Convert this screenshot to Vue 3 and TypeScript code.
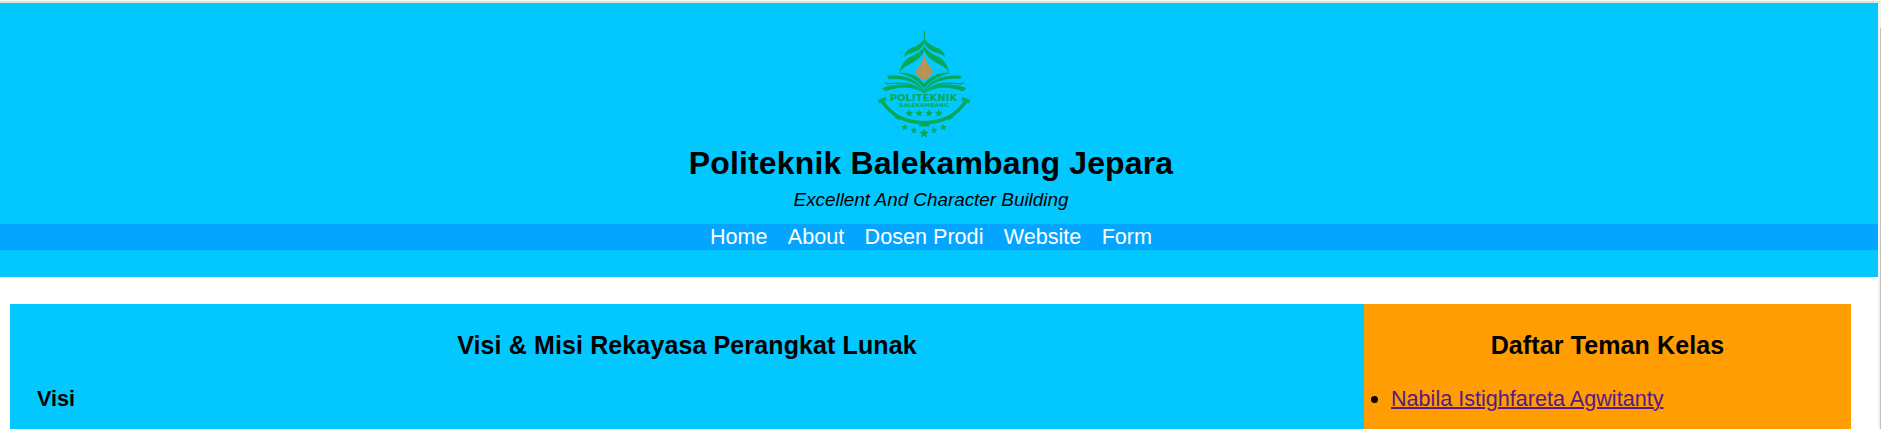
<script setup lang="ts">
const links: string[] = ['Home', 'About', 'Dosen Prodi', 'Website', 'Form']
const friends: string[] = ['Nabila Istighfareta Agwitanty']

interface Star { x: number; y: number; r: number }
const stars: Star[] = [
  { x: 148, y: 280, r: 12 },
  { x: 177, y: 280, r: 12 },
  { x: 207, y: 280, r: 12 },
  { x: 236, y: 280, r: 12 },
  { x: 134, y: 322, r: 11 },
  { x: 162, y: 331, r: 11 },
  { x: 192, y: 340, r: 16 },
  { x: 222, y: 331, r: 11 },
  { x: 250, y: 322, r: 11 },
]

function starPoints(s: Star): string {
  return Array.from({ length: 10 }, (_, i) => {
    const r = i % 2 ? s.r * 0.45 : s.r
    const a = (Math.PI * i) / 5 - Math.PI / 2
    return `${(s.x + r * Math.cos(a)).toFixed(1)},${(s.y + r * Math.sin(a)).toFixed(1)}`
  }).join(' ')
}
</script>

<template>
  <div class="window">
    <div class="edge"></div>
    <div class="body">
      <div class="page">
        <header class="header">
          <svg class="logo" viewBox="0 0 390 375" role="img" aria-label="Logo Politeknik Balekambang">
            <g fill="#04a857">
              <path d="M192 33h3l1 8-1 4 2 4-2 5v12h-3V54l-2-5 2-4-1-4z" />
              <path d="M193 56C184 70 171 77 156 83C141 89 134 97 132 111C141 103 151 101 162 97C178 91 190 80 193 69C197 80 209 91 225 97C236 101 246 103 255 111C253 97 246 89 231 83C216 77 203 70 193 56Z" />
              <path d="M193 78C183 95 171 101 156 108C135 117 121 136 118 160C125 147 133 141 145 135C168 124 187 110 193 91C199 110 218 124 241 135C253 141 261 147 268 160C265 136 251 117 230 108C215 101 203 95 193 78Z" />
              <g stroke="#04a857" stroke-width="1.5">
                <path d="M118 159C151 157 177 170 192 193C209 170 235 157 269 159C243 165 213 178 192 205C174 178 143 165 118 159Z" />
                <path d="M82 168C132 163 171 178 192 211C213 178 254 163 304 168L300 176C251 173 214 187 192 214C171 187 133 173 86 177Z" />
                <path d="M67 205C113 187 166 192 192 219C219 192 274 187 319 205L309 213C264 197 222 199 192 219C163 199 122 196 77 213Z" />
              </g>
              <path d="M74 182C78 190 84 190 92 189C137 183 173 192 192 215C213 192 249 183 294 189C303 190 308 189 312 182C312 193 304 195 294 193C249 188 211 198 192 218C173 197 138 188 91 193C80 195 74 192 74 182Z" />
            </g>
            <path fill="#be9152" d="M193 102Q196 126 209 137L219 155L209 172L200 178H185L176 172L166 155L178 137Q189 126 193 102Z" />
            <path fill="none" stroke="#6aa694" stroke-width="1.2" d="M189 134V174M197 134V174M184 142l-8 10 10 20M202 142l9 10-11 20M171 155l14 18M214 155l-14 18" />
            <path fill="none" stroke="#c99445" stroke-width="4" d="M193 112V162" />
            <text class="name" x="89" y="244" textLength="203" lengthAdjust="spacingAndGlyphs">POLITEKNIK</text>
            <text class="place" x="117" y="262" textLength="149" lengthAdjust="spacingAndGlyphs">BALEKAMBANG</text>
            <g fill="none" stroke="#04a857">
              <path stroke-width="10" d="M66 243C94 286 138 308 192 308C248 308 290 286 318 243" />
              <path stroke-width="11" d="M56 246L78 235M328 246L306 235M106 287l14 9M278 287l-14 9M177 314h31" />
            </g>
            <g fill="#04a857">
              <polygon v-for="(s, i) in stars" :key="i" :points="starPoints(s)" />
            </g>
          </svg>
          <h1>Politeknik Balekambang Jepara</h1>
          <p class="tagline">Excellent And Character Building</p>
          <nav>
            <a v-for="link in links" :key="link">{{ link }}</a>
          </nav>
        </header>
        <div class="columns">
          <main>
            <h2>Visi &amp; Misi Rekayasa Perangkat Lunak</h2>
            <h3>Visi</h3>
          </main>
          <aside>
            <h2>Daftar Teman Kelas</h2>
            <ul>
              <li v-for="friend in friends" :key="friend"><a>{{ friend }}</a></li>
            </ul>
          </aside>
        </div>
      </div>
      <div class="scrollbar"><div class="thumb"></div></div>
    </div>
  </div>
</template>

<style>
body {
  margin: 0;
  overflow: hidden;
}
</style>

<style scoped>
.window {
  height: 429px;
  display: flex;
  flex-direction: column;
  overflow: hidden;
  background: #fff;
  color: #000;
  font-family: 'Liberation Sans', Arial, sans-serif;
  font-size: 21.6px;
}
.edge {
  height: 2px;
  flex: none;
  border-top: 1px solid #f8faf2;
  background: #dfe5db;
}
.body {
  flex: 1;
  min-height: 0;
  display: flex;
}
.page {
  flex: 1;
}
.header {
  box-sizing: border-box;
  height: 274px;
  padding-top: 17px;
  background: #03c8ff;
  display: flex;
  flex-direction: column;
  align-items: center;
}
.logo {
  width: 130px;
  height: 125px;
  flex: none;
  margin: 0 28px -2px 0;
}
.name,
.place {
  fill: #04a857;
  font-family: 'DejaVu Sans', Verdana, sans-serif;
  font-weight: bold;
}
.name {
  font-size: 25px;
}
.place {
  font-size: 15px;
}
h1,
h2,
h3,
p,
ul {
  margin: 0;
}
h1 {
  margin-right: 16px;
  font-size: 32px;
  line-height: 40px;
  letter-spacing: 0.15px;
}
.tagline {
  margin: 4px 16px 11px 0;
  font-size: 18.85px;
  line-height: 26px;
  font-style: italic;
}
nav {
  box-sizing: border-box;
  width: 100%;
  height: 26px;
  padding-right: 16px;
  display: flex;
  justify-content: center;
  gap: 20.3px;
  background: #03a5ff;
  color: #fff;
  line-height: 26px;
}
.columns {
  margin: 27px 27px 0 10px;
  height: 140px;
  display: flex;
}
main {
  width: 1354px;
  background: #03c8ff;
}
aside {
  flex: 1;
  background: #ff9d02;
}
h2 {
  margin-top: 26px;
  text-align: center;
  font-size: 25px;
  line-height: 30px;
  letter-spacing: 0.12px;
}
h3 {
  margin: 26px 0 0 27px;
  font-size: 21.6px;
  line-height: 26px;
}
ul {
  margin-top: 26px;
  padding: 0;
  list-style: none;
}
li {
  display: flex;
  align-items: center;
  line-height: 26px;
}
li::before {
  content: '';
  width: 7px;
  height: 7px;
  margin: 0 13px 0 7px;
  border-radius: 50%;
  background: #000;
}
li a {
  color: #551a8b;
  text-decoration: underline;
  text-decoration-thickness: 2px;
}
.scrollbar {
  width: 3px;
  background: #f1f1f1;
}
.thumb {
  width: 1px;
  height: 401px;
  margin: 25px 0 0 2px;
  background: #c1c1c1;
}
</style>
